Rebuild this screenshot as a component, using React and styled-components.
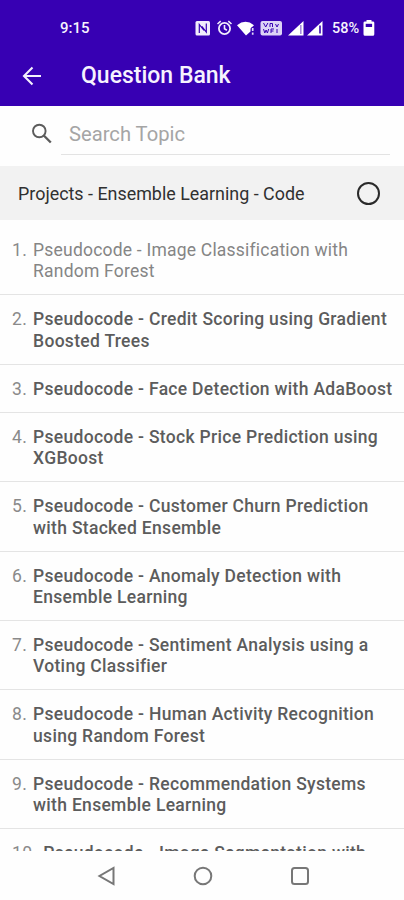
import React, { useState } from "react";
import styled, { createGlobalStyle } from "styled-components";

const GlobalStyle = createGlobalStyle`
    body {
        margin: 0;
        background: #fefefe;
        font-family: Roboto, "Liberation Sans", sans-serif;
    }
`;

const questions = [
    { title: "Pseudocode - Image Classification with\nRandom Forest", read: true },
    { title: "Pseudocode - Credit Scoring using Gradient\nBoosted Trees" },
    { title: "Pseudocode - Face Detection with AdaBoost" },
    { title: "Pseudocode - Stock Price Prediction using\nXGBoost" },
    { title: "Pseudocode - Customer Churn Prediction\nwith Stacked Ensemble" },
    { title: "Pseudocode - Anomaly Detection with\nEnsemble Learning" },
    { title: "Pseudocode - Sentiment Analysis using a\nVoting Classifier" },
    { title: "Pseudocode - Human Activity Recognition\nusing Random Forest" },
    { title: "Pseudocode - Recommendation Systems\nwith Ensemble Learning" },
    { title: "Pseudocode - Image Segmentation with" },
];

const StatusIcons = () => (
    <svg width="130" height="18" viewBox="0 0 130 18">
        {/* nfc */}
        <rect x="1.5" y="2" width="14.5" height="14.5" rx="1.5" fill="#f1ecfc" />
        <path d="M5.300 14V5.500l4.700 6M12.300 4.500v8.500l-4.500-5.700" fill="none" stroke="#3700b3" strokeWidth="1.200" />
        {/* alarm */}
        <circle cx="30.500" cy="9.500" r="5.600" fill="none" stroke="#f1ecfc" strokeWidth="1.800" />
        <path d="M30.500 6v3.800l2.400 1.400M23.500 5l3.200-2.800M37.500 5l-3.200-2.800" fill="none" stroke="#f1ecfc" strokeWidth="1.600" />
        {/* wifi */}
        <path d="M43 6.200Q51.500-.6 60 6.200L56.500 9.500v3L52 16.500Z" fill="#fff" />
        <path d="M58.700 8.600v7" stroke="#3700b3" strokeWidth="3.400" />
        <path d="M58.700 9v3M58.700 13.500v2.300" stroke="#e1d8f8" strokeWidth="1.700" />
        {/* vowifi */}
        <rect x="66.500" y="2" width="21.500" height="14.500" rx="2" fill="#ddd3f6" />
        <path d="M69.500 4l2.200 4 2.200-4M76 8V4.500h2.500V8M69.500 10l1.300 4 1.300-3 1.300 3 1.300-4M77 14v-4h3M77 12h2.500M81.500 5l1.500 3 1.500-3M83 10v4" fill="none" stroke="#3700b3" strokeWidth="1" />
        {/* signal */}
        <path d="M94 16.500L109.500 2v14.500Z" fill="#fff" />
        <path d="M106.800 6v9" stroke="#a78be0" strokeWidth="1.600" />
        <path d="M113 16.500L128.500 2v14.500Z" fill="#fff" />
        <path d="M126 6.500v8" stroke="#3700b3" strokeWidth="1.600" />
    </svg>
);

const BatteryIcon = () => (
    <svg width="12" height="16" viewBox="0 0 12 16">
        <path d="M3.500 0h5v1.600h1.300q1.500 0 1.500 1.200v11.400q0 1.500-1.500 1.500H2q-1.500 0-1.500-1.500V2.800Q.5 1.600 2 1.600h1.500Z" fill="#fff" />
        <path d="M2.700 3.800h6.400v3.200H2.700Z" fill="#3700b3" />
    </svg>
);

const BackIcon = () => (
    <svg width="20" height="20" viewBox="0 0 20 20" fill="none" stroke="#f4f0fd" strokeWidth="2.100">
        <path d="M19 10H2.500M10.500 1.500L2 10l8.500 8.500" />
    </svg>
);

const SearchIcon = () => (
    <svg width="22" height="22" viewBox="0 0 22 22" fill="none" stroke="#5c5c5c">
        <circle cx="8.300" cy="8" r="6.300" strokeWidth="1.900" />
        <path d="M12.800 12.500l7 7" strokeWidth="2.400" />
    </svg>
);

const App = () => {
    const [topic, setTopic] = useState("");
    const [selected, setSelected] = useState(false);

    return (
        <Screen>
            <GlobalStyle />
            <Header>
                <StatusBar>
                    <Clock>9:15</Clock>
                    <StatusIcons />
                    <Percent>58%</Percent>
                    <BatteryIcon />
                </StatusBar>
                <Toolbar>
                    <BackIcon />
                    <Title>Question Bank</Title>
                </Toolbar>
            </Header>
            <SearchRow>
                <SearchIcon />
                <SearchInput placeholder="Search Topic" value={topic} onChange={(e) => setTopic(e.target.value)} />
            </SearchRow>
            <TopicRow>
                <TopicName>Projects - Ensemble Learning - Code</TopicName>
                <Radio $checked={selected} onClick={() => setSelected(!selected)} />
            </TopicRow>
            <List>
                {questions.map((q, i) => (
                    <Item key={q.title}>
                        <Num>{i + 1}.</Num>
                        <Question $read={q.read}>{q.title}</Question>
                    </Item>
                ))}
            </List>
            <NavBar>
                <svg width="20" height="20" viewBox="0 0 20 20">
                    <path d="M17.500 2v16L3.500 10Z" />
                </svg>
                <svg width="20" height="20" viewBox="0 0 20 20">
                    <circle cx="10" cy="10" r="8.300" />
                </svg>
                <svg width="20" height="20" viewBox="0 0 20 20">
                    <rect x="2" y="2" width="16" height="16" rx="2.500" />
                </svg>
            </NavBar>
        </Screen>
    );
};

export default App;

const Screen = styled.div`
    display: flex;
    flex-direction: column;
    width: 404px;
    height: 900px;
    overflow: hidden;
`;

const Header = styled.header`
    flex: none;
    box-sizing: border-box;
    height: 106px;
    background: #3700b3;
    color: #f6f3fe;
`;

const StatusBar = styled.div`
    display: flex;
    align-items: center;
    height: 56px;
    padding-left: 60px;
`;

const Clock = styled.span`
    width: 134px;
    font-size: 15px;
    font-weight: 500;
`;

const Percent = styled.span`
    width: 31px;
    margin-left: 8px;
    font-size: 14.5px;
    font-weight: 500;
`;

const Toolbar = styled.div`
    display: flex;
    align-items: center;
    gap: 39px;
    height: 39px;
    padding-left: 22px;
`;

const Title = styled.h1`
    margin: 0;
    font-size: 23px;
    font-weight: 500;
`;

const SearchRow = styled.div`
    display: flex;
    flex: none;
    align-items: center;
    box-sizing: border-box;
    height: 60px;
    padding: 0 14px 5px 31px;
    gap: 8px;
`;

const SearchInput = styled.input`
    flex: 1;
    min-width: 0;
    box-sizing: border-box;
    height: 42px;
    padding: 2px 8px 0;
    border: 0;
    border-bottom: 1px solid #e3e3e3;
    outline: 0;
    background: none;
    font: 400 20.2px Roboto, "Liberation Sans", sans-serif;
    color: #444;

    &::placeholder {
        color: #a5a5a5;
    }
`;

const TopicRow = styled.div`
    display: flex;
    flex: none;
    align-items: center;
    justify-content: space-between;
    box-sizing: border-box;
    height: 54px;
    padding: 0 24px 0 18px;
    background: #f2f2f2;
`;

const TopicName = styled.div`
    font-size: 17.9px;
    color: #303030;
    white-space: nowrap;
`;

const Radio = styled.button`
    box-sizing: border-box;
    width: 23px;
    height: 23px;
    padding: 0;
    border: 2px solid #2a2a2a;
    border-radius: 50%;
    background: ${(props) => (props.$checked ? "#3700b3" : "none")};
`;

const List = styled.div`
    height: 631px;
    flex: none;
    box-sizing: border-box;
    padding-top: 6px;
    overflow: hidden;
`;

const Item = styled.div`
    display: flex;
    padding: 14px 0 11.9px 12px;
    border-bottom: 1px solid #e4e4e4;
    font-size: 17.5px;
    line-height: 21.25px;
`;

const Num = styled.span`
    margin-right: 6px;
    color: #8a8a8a;
    letter-spacing: 0.3px;
`;

const Question = styled.div`
    white-space: pre;
    letter-spacing: ${(props) => (props.$read ? "0.21px" : "0.3px")};
    font-weight: ${(props) => (props.$read ? 400 : 500)};
    color: ${(props) => (props.$read ? "#858585" : "#5c5c5c")};
`;

const NavBar = styled.nav`
    display: flex;
    flex: 1;
    align-items: center;
    justify-content: center;
    gap: 77px;
    padding-left: 2px;
    fill: none;
    stroke: #777;
    stroke-width: 2;
`;
